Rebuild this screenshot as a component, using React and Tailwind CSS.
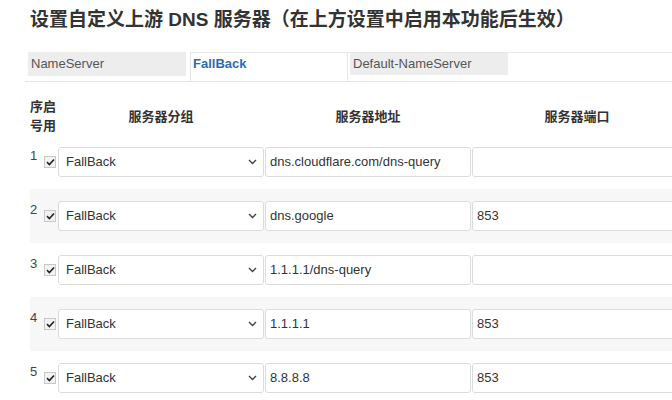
import React from 'react';

const rows = [
  { id: 1, addr: 'dns.cloudflare.com/dns-query', port: '' },
  { id: 2, addr: 'dns.google', port: '853' },
  { id: 3, addr: '1.1.1.1/dns-query', port: '' },
  { id: 4, addr: '1.1.1.1', port: '853' },
  { id: 5, addr: '8.8.8.8', port: '853' },
];

const Check = () => (
  <span className="mt-[8px] flex h-[12px] w-[12px] items-center justify-center border border-[#c8c8c8] bg-[#f2f2f2]">
    <svg width="9" height="8" viewBox="0 0 9 8" fill="none">
      <path d="M1 4.2 L3.4 6.5 L8 1.5" stroke="#222" strokeWidth="1.6" />
    </svg>
  </span>
);

const Row = ({ row, striped }) => (
  <div className={`flex h-[54px] items-start pt-[12px] ${striped ? 'bg-[#f7f7f7]' : ''}`}>
    <div className="flex w-[28px] shrink-0 items-start gap-[7px] pt-[1px]">
      <span className="text-[13px] leading-[16px] text-[#444]">{row.id}</span>
      <Check />
    </div>
    <div className="flex h-[30px] w-[206px] shrink-0 items-center justify-between rounded-[3px] border border-[#dcdcdc] bg-white pl-[7px] pr-[6px]">
      <span className="text-[13px] text-[#333]">FallBack</span>
      <svg width="9" height="6" viewBox="0 0 9 6" fill="none">
        <path d="M1 1 L4.5 4.5 L8 1" stroke="#444" strokeWidth="1.4" />
      </svg>
    </div>
    <div className="ml-[1px] flex h-[30px] w-[206px] shrink-0 items-center rounded-[3px] border border-[#dcdcdc] bg-white pl-[4px]">
      <span className="text-[13px] text-[#333]">{row.addr}</span>
    </div>
    <div className="ml-[1px] flex h-[30px] w-[220px] shrink-0 items-center rounded-[3px] border border-[#dcdcdc] bg-white pl-[4px]">
      <span className="text-[13px] text-[#333]">{row.port}</span>
    </div>
  </div>
);

export default function App() {
  return (
    <div className="h-[400px] w-[672px] overflow-hidden bg-white font-['Liberation_Sans','Noto_Sans_CJK_SC',sans-serif] text-[#333]">
      <h2 className="pl-[30px] pt-[8px] text-[19px] font-bold leading-[24px] text-[#333]">
        设置自定义上游 DNS 服务器（在上方设置中启用本功能后生效）
      </h2>

      {/* tabs */}
      <div className="ml-[25px] mt-[20px] flex h-[30px] border-b border-[#e6e6e6]">
        <div className="ml-[3px] h-[24px] w-[158px] shrink-0 bg-[#ededed] pl-[3px] text-[13px] leading-[24px] text-[#555]">
          NameServer
        </div>
        <div className="ml-[4px] flex flex-1 border-t border-[#e6e6e6]">
          <div className="h-[28px] w-[158px] shrink-0 border-x border-[#e6e6e6] pl-[2px] text-[13px] font-bold leading-[22px] text-[#2a6bb4]">
            FallBack
          </div>
          <div className="ml-[2px] h-[22px] w-[158px] shrink-0 bg-[#ededed] pl-[3px] text-[13px] leading-[22px] text-[#555]">
            Default-NameServer
          </div>
        </div>
      </div>

      {/* table */}
      <div className="ml-[30px] w-[700px]">
        <div className="flex items-center pt-[15px] text-[13px] font-bold leading-[19px] text-[#333]">
          <div className="w-[28px] shrink-0">
            序启
            <br />
            号用
          </div>
          <div className="w-[206px] shrink-0 text-center">服务器分组</div>
          <div className="ml-[1px] w-[206px] shrink-0 text-center">服务器地址</div>
          <div className="ml-[1px] w-[210px] shrink-0 text-center">服务器端口</div>
        </div>
        {rows.map((row, i) => (
          <Row key={row.id} row={row} striped={i % 2 === 1} />
        ))}
      </div>
    </div>
  );
}
